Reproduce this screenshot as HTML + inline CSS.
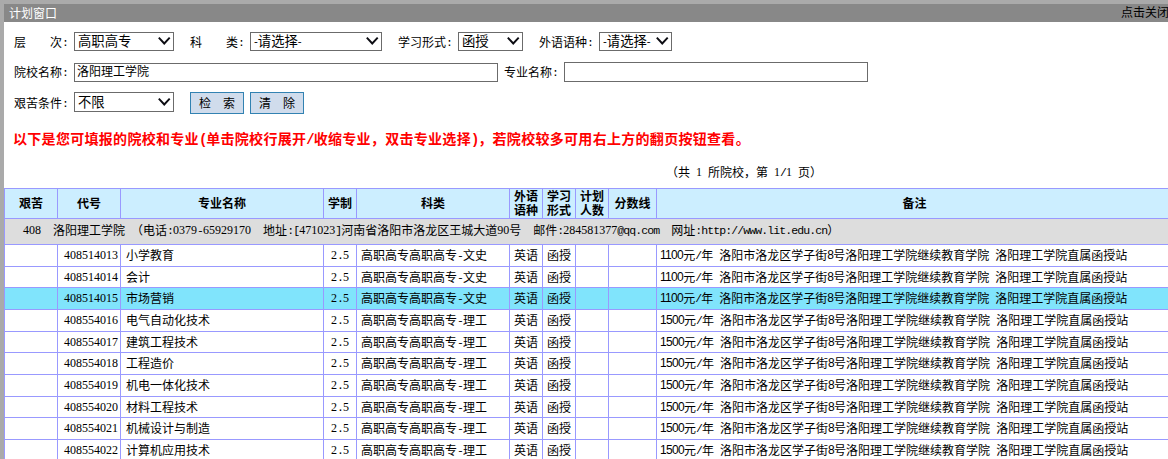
<!DOCTYPE html>
<html lang="zh-CN"><head><meta charset="utf-8"><title>计划窗口</title>
<style>
*{margin:0;padding:0;box-sizing:border-box}
html,body{width:1168px;height:459px;overflow:hidden;background:#aaa}
body{position:relative;font-family:"Liberation Mono","Noto Sans CJK SC",monospace;font-size:12px;color:#000;line-height:14px}
.a{font-family:"Liberation Mono",monospace;font-size:11.5px;letter-spacing:-0.9px;position:relative;top:-1px;line-height:0}
.d{font-family:"Liberation Serif",serif;position:relative;top:-1px;line-height:0}
.n{font-family:"Liberation Sans",sans-serif;letter-spacing:-0.67px;position:relative;top:-1px;line-height:0}
div,span.p{position:absolute;white-space:nowrap}
#white{left:4px;top:22px;width:1200px;height:450px;background:#fff}
#title{left:4px;top:4px;width:1200px;height:18px;background:#888}
.t{height:14px;line-height:14px}
.sel{border:1px solid #6b6b6b;background:#fff;font-size:13.333px;font-family:"Liberation Sans","Noto Sans CJK SC",sans-serif}
.sel span.p{left:3px;top:2px;line-height:15px;height:15px}
.sel .a{letter-spacing:0;font-family:"Liberation Sans",sans-serif}
.sel svg{position:absolute;right:2px}
.inp{border:1px solid #6b6b6b;background:#fff}
.btn{border:1px solid #3282b2;background:#d0dcec;height:22px;width:54px;text-align:center;line-height:14px;padding-top:5px}
.hl{background:#9999ff;left:4px;width:1200px;height:1px}
.vl{background:#9999ff;width:1px}
.hd{background:#cceeff;top:189px;height:29px;font-weight:bold;text-align:center}
.hd span.p{left:0;right:0}
.red{left:13px;top:131px;color:#f00;font-weight:bold;font-size:14px;line-height:18px;letter-spacing:0.3px}
.row{left:5px;width:1200px}
.red .a{font-size:14px;letter-spacing:-1.1px;top:0}
</style></head>
<body>
<div id="title"></div>
<div id="white"></div>
<div class="t" style="left:9px;top:8px;color:#fff">计划窗口</div>
<div class="t" style="left:1121px;top:7px">点击关闭</div>
<div class="t" style="left:14px;top:37px">层　　次<span class="a">:</span></div>
<div class="sel" style="left:74px;top:32px;width:100px;height:19px"><span class="p" style="top:1px">高职高专</span><svg width="14" height="10" viewBox="0 0 14 10" style="top:3px"><polygon points="1.1,2.3 2.5,0.9 7.25,5.9 12,0.9 13.4,2.3 7.25,8.9" fill="#0c0c12"/></svg></div>
<div class="t" style="left:190px;top:37px">科　　类<span class="a">:</span></div>
<div class="sel" style="left:250px;top:32px;width:132px;height:19px"><span class="p" style="top:1px"><span class="a">-</span>请选择<span class="a">-</span></span><svg width="14" height="10" viewBox="0 0 14 10" style="top:3px"><polygon points="1.1,2.3 2.5,0.9 7.25,5.9 12,0.9 13.4,2.3 7.25,8.9" fill="#0c0c12"/></svg></div>
<div class="t" style="left:398px;top:37px">学习形式<span class="a">:</span></div>
<div class="sel" style="left:458px;top:32px;width:65px;height:19px"><span class="p" style="top:1px">函授</span><svg width="14" height="10" viewBox="0 0 14 10" style="top:3px"><polygon points="1.1,2.3 2.5,0.9 7.25,5.9 12,0.9 13.4,2.3 7.25,8.9" fill="#0c0c12"/></svg></div>
<div class="t" style="left:539px;top:37px">外语语种<span class="a">:</span></div>
<div class="sel" style="left:599px;top:32px;width:73px;height:19px"><span class="p" style="top:1px"><span class="a">-</span>请选择<span class="a">-</span></span><svg width="14" height="10" viewBox="0 0 14 10" style="top:3px"><polygon points="1.1,2.3 2.5,0.9 7.25,5.9 12,0.9 13.4,2.3 7.25,8.9" fill="#0c0c12"/></svg></div>
<div class="t" style="left:14px;top:67px">院校名称<span class="a">:</span></div>
<div class="inp" style="left:74px;top:63px;width:424px;height:19px"><span class="p" style="left:2px;top:2px">洛阳理工学院</span></div>
<div class="t" style="left:504px;top:67px">专业名称<span class="a">:</span></div>
<div class="inp" style="left:564px;top:62px;width:304px;height:20px"></div>
<div class="t" style="left:14px;top:98px">艰苦条件<span class="a">:</span></div>
<div class="sel" style="left:74px;top:92px;width:100px;height:20px"><span class="p" style="top:2px">不限</span><svg width="14" height="10" viewBox="0 0 14 10" style="top:4px"><polygon points="1.1,2.3 2.5,0.9 7.25,5.9 12,0.9 13.4,2.3 7.25,8.9" fill="#0c0c12"/></svg></div>
<div class="btn" style="left:190px;top:92px">检　索</div>
<div class="btn" style="left:250px;top:92px">清　除</div>
<div class="red">以下是您可填报的院校和专业<span class="a">(</span>单击院校行展开<span class="a">/</span>收缩专业，双击专业选择<span class="a">)</span>，若院校较多可用右上方的翻页按钮查看。</div>
<div class="t" style="left:666px;top:167px">（共<span class="a">&nbsp;</span><span class="d">1</span><span class="a">&nbsp;</span>所院校，第<span class="a">&nbsp;</span><span class="d">1</span><span class="a">/</span><span class="d">1</span><span class="a">&nbsp;</span>页）</div>
<div class="hl" style="top:188px"></div>
<div class="hl" style="top:218px"></div>
<div class="hd" style="left:5px;width:52px"><span class="p" style="top:9px">艰苦</span></div>
<div class="hd" style="left:58px;width:62px"><span class="p" style="top:9px">代号</span></div>
<div class="hd" style="left:121px;width:202px"><span class="p" style="top:9px">专业名称</span></div>
<div class="hd" style="left:324px;width:32px"><span class="p" style="top:9px">学制</span></div>
<div class="hd" style="left:357px;width:152px"><span class="p" style="top:9px">科类</span></div>
<div class="hd" style="left:510px;width:32px"><span class="p" style="top:2px">外语<br>语种</span></div>
<div class="hd" style="left:543px;width:32px"><span class="p" style="top:2px">学习<br>形式</span></div>
<div class="hd" style="left:576px;width:32px"><span class="p" style="top:2px">计划<br>人数</span></div>
<div class="hd" style="left:609px;width:47px"><span class="p" style="top:9px">分数线</span></div>
<div class="hd" style="left:657px;width:515px"><span class="p" style="top:9px">备注</span></div>
<div class="row" style="top:219px;height:25px;background:#ddd"></div>
<div class="t" style="left:23px;top:225px"><span class="d">408</span><span class="a">&nbsp;&nbsp;</span>洛阳理工学院<span class="a">&nbsp;</span>（电话<span class="a">:</span><span class="d">0379</span><span class="a">-</span><span class="d">65929170</span><span class="a">&nbsp;&nbsp;</span>地址<span class="a">:[</span><span class="d">471023</span><span class="a">]</span>河南省洛阳市洛龙区王城大道<span class="d">90</span>号<span class="a">&nbsp;&nbsp;</span>邮件<span class="a">:</span><span class="d">284581377</span><span class="a">@qq.com&nbsp;&nbsp;</span>网址<span class="a">:http:</span><span class="a">//www.lit.edu.cn</span>）</div>
<div class="hl" style="top:244px"></div>
<div class="t" style="left:64px;top:250px"><span class="d">408514013</span></div>
<div class="t" style="left:126px;top:250px">小学教育</div>
<div class="t" style="left:331px;top:250px"><span class="d">2</span><span class="a">.</span><span class="d">5</span></div>
<div class="t" style="left:361px;top:250px">高职高专高职高专<span class="a">-</span>文史</div>
<div class="t" style="left:514px;top:250px">英语</div>
<div class="t" style="left:547px;top:250px">函授</div>
<div class="t" style="left:660px;top:250px"><span class="n">1100</span>元<span class="a">/</span>年<span class="a">&nbsp;</span>洛阳市洛龙区学子街<span class="n">8</span>号洛阳理工学院继续教育学院<span class="a">&nbsp;</span>洛阳理工学院直属函授站</div>
<div class="hl" style="top:266px"></div>
<div class="t" style="left:64px;top:272px"><span class="d">408514014</span></div>
<div class="t" style="left:126px;top:272px">会计</div>
<div class="t" style="left:331px;top:272px"><span class="d">2</span><span class="a">.</span><span class="d">5</span></div>
<div class="t" style="left:361px;top:272px">高职高专高职高专<span class="a">-</span>文史</div>
<div class="t" style="left:514px;top:272px">英语</div>
<div class="t" style="left:547px;top:272px">函授</div>
<div class="t" style="left:660px;top:272px"><span class="n">1100</span>元<span class="a">/</span>年<span class="a">&nbsp;</span>洛阳市洛龙区学子街<span class="n">8</span>号洛阳理工学院继续教育学院<span class="a">&nbsp;</span>洛阳理工学院直属函授站</div>
<div class="row" style="top:288px;height:21px;background:#80e4fc"></div>
<div class="hl" style="top:287px"></div>
<div class="t" style="left:64px;top:293px"><span class="d">408514015</span></div>
<div class="t" style="left:126px;top:293px">市场营销</div>
<div class="t" style="left:331px;top:293px"><span class="d">2</span><span class="a">.</span><span class="d">5</span></div>
<div class="t" style="left:361px;top:293px">高职高专高职高专<span class="a">-</span>文史</div>
<div class="t" style="left:514px;top:293px">英语</div>
<div class="t" style="left:547px;top:293px">函授</div>
<div class="t" style="left:660px;top:293px"><span class="n">1100</span>元<span class="a">/</span>年<span class="a">&nbsp;</span>洛阳市洛龙区学子街<span class="n">8</span>号洛阳理工学院继续教育学院<span class="a">&nbsp;</span>洛阳理工学院直属函授站</div>
<div class="hl" style="top:309px"></div>
<div class="t" style="left:64px;top:315px"><span class="d">408554016</span></div>
<div class="t" style="left:126px;top:315px">电气自动化技术</div>
<div class="t" style="left:331px;top:315px"><span class="d">2</span><span class="a">.</span><span class="d">5</span></div>
<div class="t" style="left:361px;top:315px">高职高专高职高专<span class="a">-</span>理工</div>
<div class="t" style="left:514px;top:315px">英语</div>
<div class="t" style="left:547px;top:315px">函授</div>
<div class="t" style="left:660px;top:315px"><span class="n">1500</span>元<span class="a">/</span>年<span class="a">&nbsp;</span>洛阳市洛龙区学子街<span class="n">8</span>号洛阳理工学院继续教育学院<span class="a">&nbsp;</span>洛阳理工学院直属函授站</div>
<div class="hl" style="top:331px"></div>
<div class="t" style="left:64px;top:337px"><span class="d">408554017</span></div>
<div class="t" style="left:126px;top:337px">建筑工程技术</div>
<div class="t" style="left:331px;top:337px"><span class="d">2</span><span class="a">.</span><span class="d">5</span></div>
<div class="t" style="left:361px;top:337px">高职高专高职高专<span class="a">-</span>理工</div>
<div class="t" style="left:514px;top:337px">英语</div>
<div class="t" style="left:547px;top:337px">函授</div>
<div class="t" style="left:660px;top:337px"><span class="n">1500</span>元<span class="a">/</span>年<span class="a">&nbsp;</span>洛阳市洛龙区学子街<span class="n">8</span>号洛阳理工学院继续教育学院<span class="a">&nbsp;</span>洛阳理工学院直属函授站</div>
<div class="hl" style="top:352px"></div>
<div class="t" style="left:64px;top:358px"><span class="d">408554018</span></div>
<div class="t" style="left:126px;top:358px">工程造价</div>
<div class="t" style="left:331px;top:358px"><span class="d">2</span><span class="a">.</span><span class="d">5</span></div>
<div class="t" style="left:361px;top:358px">高职高专高职高专<span class="a">-</span>理工</div>
<div class="t" style="left:514px;top:358px">英语</div>
<div class="t" style="left:547px;top:358px">函授</div>
<div class="t" style="left:660px;top:358px"><span class="n">1500</span>元<span class="a">/</span>年<span class="a">&nbsp;</span>洛阳市洛龙区学子街<span class="n">8</span>号洛阳理工学院继续教育学院<span class="a">&nbsp;</span>洛阳理工学院直属函授站</div>
<div class="hl" style="top:374px"></div>
<div class="t" style="left:64px;top:380px"><span class="d">408554019</span></div>
<div class="t" style="left:126px;top:380px">机电一体化技术</div>
<div class="t" style="left:331px;top:380px"><span class="d">2</span><span class="a">.</span><span class="d">5</span></div>
<div class="t" style="left:361px;top:380px">高职高专高职高专<span class="a">-</span>理工</div>
<div class="t" style="left:514px;top:380px">英语</div>
<div class="t" style="left:547px;top:380px">函授</div>
<div class="t" style="left:660px;top:380px"><span class="n">1500</span>元<span class="a">/</span>年<span class="a">&nbsp;</span>洛阳市洛龙区学子街<span class="n">8</span>号洛阳理工学院继续教育学院<span class="a">&nbsp;</span>洛阳理工学院直属函授站</div>
<div class="hl" style="top:396px"></div>
<div class="t" style="left:64px;top:402px"><span class="d">408554020</span></div>
<div class="t" style="left:126px;top:402px">材料工程技术</div>
<div class="t" style="left:331px;top:402px"><span class="d">2</span><span class="a">.</span><span class="d">5</span></div>
<div class="t" style="left:361px;top:402px">高职高专高职高专<span class="a">-</span>理工</div>
<div class="t" style="left:514px;top:402px">英语</div>
<div class="t" style="left:547px;top:402px">函授</div>
<div class="t" style="left:660px;top:402px"><span class="n">1500</span>元<span class="a">/</span>年<span class="a">&nbsp;</span>洛阳市洛龙区学子街<span class="n">8</span>号洛阳理工学院继续教育学院<span class="a">&nbsp;</span>洛阳理工学院直属函授站</div>
<div class="hl" style="top:417px"></div>
<div class="t" style="left:64px;top:423px"><span class="d">408554021</span></div>
<div class="t" style="left:126px;top:423px">机械设计与制造</div>
<div class="t" style="left:331px;top:423px"><span class="d">2</span><span class="a">.</span><span class="d">5</span></div>
<div class="t" style="left:361px;top:423px">高职高专高职高专<span class="a">-</span>理工</div>
<div class="t" style="left:514px;top:423px">英语</div>
<div class="t" style="left:547px;top:423px">函授</div>
<div class="t" style="left:660px;top:423px"><span class="n">1500</span>元<span class="a">/</span>年<span class="a">&nbsp;</span>洛阳市洛龙区学子街<span class="n">8</span>号洛阳理工学院继续教育学院<span class="a">&nbsp;</span>洛阳理工学院直属函授站</div>
<div class="hl" style="top:439px"></div>
<div class="t" style="left:64px;top:445px"><span class="d">408554022</span></div>
<div class="t" style="left:126px;top:445px">计算机应用技术</div>
<div class="t" style="left:331px;top:445px"><span class="d">2</span><span class="a">.</span><span class="d">5</span></div>
<div class="t" style="left:361px;top:445px">高职高专高职高专<span class="a">-</span>理工</div>
<div class="t" style="left:514px;top:445px">英语</div>
<div class="t" style="left:547px;top:445px">函授</div>
<div class="t" style="left:660px;top:445px"><span class="n">1500</span>元<span class="a">/</span>年<span class="a">&nbsp;</span>洛阳市洛龙区学子街<span class="n">8</span>号洛阳理工学院继续教育学院<span class="a">&nbsp;</span>洛阳理工学院直属函授站</div>
<div class="vl" style="left:4px;top:188px;height:30px"></div>
<div class="vl" style="left:4px;top:218px;height:250px"></div>
<div class="vl" style="left:57px;top:188px;height:30px"></div>
<div class="vl" style="left:57px;top:244px;height:250px"></div>
<div class="vl" style="left:120px;top:188px;height:30px"></div>
<div class="vl" style="left:120px;top:244px;height:250px"></div>
<div class="vl" style="left:323px;top:188px;height:30px"></div>
<div class="vl" style="left:323px;top:244px;height:250px"></div>
<div class="vl" style="left:356px;top:188px;height:30px"></div>
<div class="vl" style="left:356px;top:244px;height:250px"></div>
<div class="vl" style="left:509px;top:188px;height:30px"></div>
<div class="vl" style="left:509px;top:244px;height:250px"></div>
<div class="vl" style="left:542px;top:188px;height:30px"></div>
<div class="vl" style="left:542px;top:244px;height:250px"></div>
<div class="vl" style="left:575px;top:188px;height:30px"></div>
<div class="vl" style="left:575px;top:244px;height:250px"></div>
<div class="vl" style="left:608px;top:188px;height:30px"></div>
<div class="vl" style="left:608px;top:244px;height:250px"></div>
<div class="vl" style="left:656px;top:188px;height:30px"></div>
<div class="vl" style="left:656px;top:244px;height:250px"></div>
</body></html>
